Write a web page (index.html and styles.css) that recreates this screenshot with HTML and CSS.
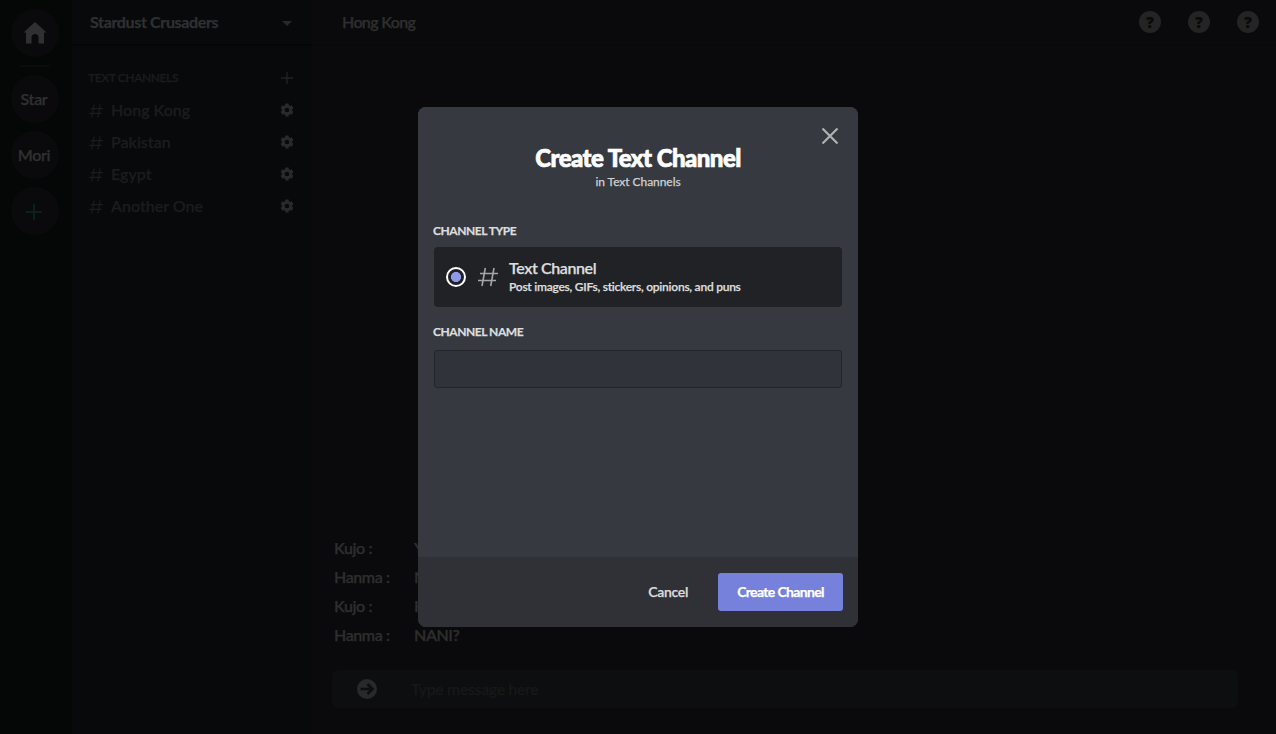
FILE: index.html
```html
<!DOCTYPE html>
<html lang="en">
<head>
<meta charset="utf-8">
<title>Stardust Crusaders</title>
<link rel="stylesheet" href="styles.css">
</head>
<body>
<svg width="0" height="0" class="defs">
  <symbol id="gear" viewBox="0 0 24 24"><path fill-rule="evenodd" d="M19.7 12c0-.5 0-.9-.1-1.400l2.400-1.800-2.800-4.800-2.800 1.200c-.7-.6-1.500-1-2.300-1.300L13.700 1h-5.400l-.4 2.900c-.8.3-1.600.7-2.300 1.300L2.800 4 0 8.800l2.400 1.800c-.1.9-.1 1.900 0 2.800L0 15.200 2.800 20l2.800-1.200c.7.6 1.500 1 2.300 1.300l.4 2.900h5.400l.4-2.900c.8-.3 1.600-.7 2.300-1.300l2.800 1.200 2.800-4.800-2.400-1.800c.1-.5.1-.9.1-1.400zM11 16a4 4 0 1 1 0-8 4 4 0 0 1 0 8z" transform="translate(1 0)"/></symbol>
  <symbol id="hash" viewBox="0 0 20 20"><path d="M7.300 1 4 19M16 1l-3.300 18M2 6.500h18M0 13.500h18" fill="none" stroke="currentColor"/></symbol>
</svg>
<div class="app">
  <nav class="rail">
    <div class="guild home"><svg width="24" height="22" viewBox="0 0 24 22"><path d="M12 0 .5 10.500H3V21.500h5.500v-6a3.500 3.500 0 0 1 7 0v6H21v-11h2.500z" fill="currentColor"/></svg></div>
    <div class="rule"></div>
    <div class="guild">Star</div>
    <div class="guild">Mori</div>
    <div class="guild add"><svg width="18" height="18" viewBox="0 0 18 18"><path d="M9 1v16M1 9h16" stroke="currentColor" stroke-width="1.600"/></svg></div>
  </nav>
  <aside class="sidebar">
    <header class="server"><span>Stardust Crusaders</span><svg width="10" height="5" viewBox="0 0 10 5"><path d="M0 0h10L5 5z" fill="currentColor"/></svg></header>
    <div class="category"><span>TEXT CHANNELS</span><svg width="14" height="14" viewBox="0 0 14 14"><path d="M7 1v12M1 7h12" stroke="currentColor" stroke-width="1.300"/></svg></div>
    <div class="channel"><svg class="hash"><use href="#hash"/></svg><span>Hong Kong</span><svg class="gear"><use href="#gear"/></svg></div>
    <div class="channel"><svg class="hash"><use href="#hash"/></svg><span>Pakistan</span><svg class="gear"><use href="#gear"/></svg></div>
    <div class="channel"><svg class="hash"><use href="#hash"/></svg><span>Egypt</span><svg class="gear"><use href="#gear"/></svg></div>
    <div class="channel"><svg class="hash"><use href="#hash"/></svg><span>Another One</span><svg class="gear"><use href="#gear"/></svg></div>
  </aside>
  <main class="chat">
    <header class="topbar"><span class="room">Hong Kong</span><div class="helps"><i>?</i><i>?</i><i>?</i></div></header>
    <div class="messages">
      <div class="message"><b>Kujo :</b><span>Yo</span></div>
      <div class="message"><b>Hanma :</b><span>Nani</span></div>
      <div class="message"><b>Kujo :</b><span>Ha</span></div>
      <div class="message"><b>Hanma :</b><span>NANI?</span></div>
    </div>
    <div class="composer"><svg width="20" height="20" viewBox="0 0 20 20"><circle cx="10" cy="10" r="10" fill="currentColor"/><path d="M3.500 10h12M10.500 5l5 5-5 5" fill="none" stroke="#0c0e0f" stroke-width="2.600"/></svg><span>Type message here</span></div>
  </main>
</div>
<section class="modal">
  <div class="body">
    <svg class="close" width="18" height="18" viewBox="0 0 18 18"><path d="m1.500 1.500 15 15m0-15-15 15" stroke="currentColor" stroke-width="2.200"/></svg>
    <h1><span>Create Text Channel</span></h1>
    <p class="sub"><span>in Text Channels</span></p>
    <div class="label type"><span>CHANNEL TYPE</span></div>
    <div class="option">
      <div class="radio"></div>
      <svg class="bighash"><use href="#hash"/></svg>
      <div><div class="name"><span>Text Channel</span></div><div class="desc"><span>Post images, GIFs, stickers, opinions, and puns</span></div></div>
    </div>
    <div class="label chan"><span>CHANNEL NAME</span></div>
    <div class="input"></div>
  </div>
  <footer class="actions"><span class="cancel">Cancel</span><div class="create"><span>Create Channel</span></div></footer>
</section>
</body>
</html>
```
FILE: styles.css
```css
* { box-sizing: border-box; }
body { margin: 0; background: #0a0a0c; font-family: Lato, "Open Sans", sans-serif; font-size: 16px; color: #2e2e2e; overflow: hidden; font-variant-ligatures: none; -webkit-text-stroke: 0.25px; }
.defs { position: absolute; }
svg { display: block; flex: none; }
span { white-space: nowrap; }
.app { display: flex; height: 734px; }
.rail { width: 72px; background: #050606; padding: 9px 0 0 11px; }
.guild { width: 48px; height: 48px; border-radius: 50%; background: #0a0a0c; display: flex; align-items: center; justify-content: center; margin-bottom: 8px; font-weight: 600; color: #303030; padding: 0 2px 2px 0; letter-spacing: -0.3px; }
.home { color: #303030; padding: 0; }
.add { color: #0a2a1c; padding: 1px 2px 0 0; }
.rule { width: 30px; height: 2px; background: #0a0b0b; margin: 0 9px 8px; }
.sidebar { width: 240px; background: #08090b; color: #1b1c1d; }
.server { height: 46px; border-bottom: 2px solid #050608; display: flex; align-items: center; justify-content: space-between; padding: 0 20px 0 18px; font-weight: 700; color: #303030; letter-spacing: -0.35px; }
.server span { margin-top: -2px; }
.server svg { color: #292929; margin-top: 2px; }
.category { display: flex; justify-content: space-between; align-items: center; height: 20px; margin: 22px 18px 6px 16px; font-size: 12px; font-weight: 600; letter-spacing: -0.4px; }
.category span { margin-top: -1px; }
.category svg { color: #222324; }
.channel { display: flex; align-items: center; height: 32px; padding: 0 18px 0 17px; font-weight: 600; }
.channel span { margin-top: -2px; }
.hash { width: 14px; height: 16px; stroke-width: 1.800; margin: 1px 8px 0 0; }
.gear { width: 14px; height: 14px; margin-left: auto; fill: #2a2a2a; }
.chat { flex: 1; display: flex; flex-direction: column; font-weight: 600; }
.topbar { height: 46px; border-bottom: 1px solid #08080a; padding: 0 17px 2px 30px; display: flex; align-items: center; justify-content: space-between; letter-spacing: -0.65px; }
.helps { display: flex; gap: 27px; }
.helps i { width: 22px; height: 22px; border-radius: 50%; background: #242424; color: #0a0a0c; font: 800 15px/22px "Open Sans", sans-serif; text-align: center; letter-spacing: 0; }
.messages { margin-top: auto; padding-left: 22px; letter-spacing: -0.4px; }
.message { display: flex; height: 29px; align-items: center; }
.message b { font-weight: 600; width: 80px; }
.composer { display: flex; align-items: center; height: 38px; margin: 21px 38px 26px 20px; background: #0c0e0f; border-radius: 6px; padding-left: 25px; color: #292929; letter-spacing: -0.4px; }
.composer span { margin: -2px 0 0 34px; color: #171817; }
.modal { position: absolute; left: 418px; top: 107px; width: 440px; height: 520px; border-radius: 8px; overflow: hidden; background: #36393f; color: #dcddde; }
.body { height: 450px; padding: 0 16px; background: #36393f; position: relative; }
.close { position: absolute; right: 19px; top: 20px; color: #afb1b3; }
h1 { margin: 0; padding-top: 36px; height: 66px; font-size: 24px; line-height: 30px; font-weight: 900; color: #fff; text-align: center; letter-spacing: -0.55px; -webkit-text-stroke: 0.7px; }
.sub { margin: 0; height: 18px; line-height: 18px; font-size: 12px; text-align: center; color: #d0d1d3; letter-spacing: -0.05px; }
.label { font-size: 12px; line-height: 16px; font-weight: 700; margin-left: -1px; letter-spacing: -0.45px; }
.type { margin-top: 32px; }
.option { display: flex; align-items: center; height: 60px; margin-top: 8px; border-radius: 4px; background: #202225; padding-left: 12px; }
.radio { width: 20px; height: 20px; border-radius: 50%; border: 2px solid #fff; background: radial-gradient(circle, #8e99e8 4.800px, transparent 5.300px); }
.bighash { width: 20px; height: 20px; margin: 0 11px 0 12px; color: #a3a6a9; stroke-width: 1.600; }
.name { font-size: 16px; line-height: 20px; font-weight: 600; letter-spacing: -0.4px; }
.desc { font-size: 12px; line-height: 18px; font-weight: 600; letter-spacing: -0.25px; }
.chan { margin-top: 17px; }
.input { height: 38px; margin-top: 10px; border: 1px solid #23252a; border-radius: 3px; background: #303339; }
.actions { height: 70px; background: #303136; display: flex; align-items: center; justify-content: flex-end; padding-right: 15px; font-size: 14px; }
.actions span { margin-top: -1px; }
.cancel { font-weight: 600; margin-right: 30px; letter-spacing: -0.3px; }
.create { width: 125px; height: 38px; border-radius: 3px; background: #7681dc; color: #fff; font-weight: 700; display: flex; align-items: center; justify-content: center; letter-spacing: -0.65px; }
```
